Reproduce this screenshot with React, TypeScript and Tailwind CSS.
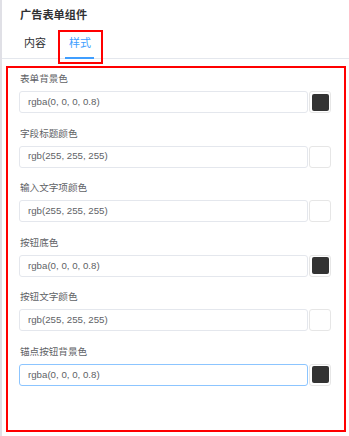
import React from "react";

type Field = { label: string; value: string; swatch: string; focused?: boolean };

const fields: Field[] = [
  { label: "表单背景色", value: "rgba(0, 0, 0, 0.8)", swatch: "#333333" },
  { label: "字段标题颜色", value: "rgb(255, 255, 255)", swatch: "#ffffff" },
  { label: "输入文字项颜色", value: "rgb(255, 255, 255)", swatch: "#ffffff" },
  { label: "按钮底色", value: "rgba(0, 0, 0, 0.8)", swatch: "#333333" },
  { label: "按钮文字颜色", value: "rgb(255, 255, 255)", swatch: "#ffffff" },
  { label: "锚点按钮背景色", value: "rgba(0, 0, 0, 0.8)", swatch: "#333333", focused: true },
];

const font = "font-['Liberation_Sans','Noto_Sans_CJK_SC',sans-serif]";

export default function App() {
  return (
    <div className={`flex w-[349px] h-[436px] bg-white overflow-hidden ${font}`}>
      <div className="w-[2px] shrink-0 bg-[#e0e0e6]" />
      <div className="relative flex-1 flex flex-col">
        <div className="h-[29px] pt-[7px] pl-[18px] text-[11.2px] leading-[16px] font-bold text-[#303133]">
          广告表单组件
        </div>
        <div className="flex h-[30px] border-b border-[#e4e7ed] text-[11px]">
          <div className="pl-[22px] pr-[19px] leading-[29px] text-[#303133]">内容</div>
          <div className="relative px-[4px] leading-[29px] text-[#409eff]">
            样式
            <div className="absolute left-0 right-[1px] bottom-[-1px] h-[2px] bg-[#409eff]" />
          </div>
        </div>
        {/* annotation around the active tab */}
        <div className="absolute left-[56px] top-[30px] w-[45px] h-[34px] border-2 border-[#ff0000]" />

        <div className="mt-[7px] ml-[4px] w-[340px] h-[366px] border-2 border-[#ff0000] pt-[3px] pl-[11px] pr-[13px]">
          {fields.map((f) => (
            <FieldRow key={f.label} field={f} />
          ))}
        </div>
      </div>
    </div>
  );
}

function FieldRow({ field }: { field: Field }) {
  return (
    <div className="mb-[12.6px]">
      <div className="h-[16px] leading-[16px] pl-[1px] mb-[4px] text-[9.6px] text-[#606266]">{field.label}</div>
      <div className="flex items-center">
        <div
          className={`w-[289px] h-[22px] rounded-[3px] border pl-[8px] flex items-center text-[9.7px] text-[#606266] ${
            field.focused ? "border-[#8cc5ff]" : "border-[#e4e7ed]"
          }`}
        >
          {field.value}
        </div>
        <div className="ml-[1px] w-[22px] h-[22px] rounded-[3px] border border-[#e6e6e6] flex items-center justify-center">
          <div className="w-[17px] h-[17px] rounded-[2px]" style={{ backgroundColor: field.swatch }} />
        </div>
      </div>
    </div>
  );
}
